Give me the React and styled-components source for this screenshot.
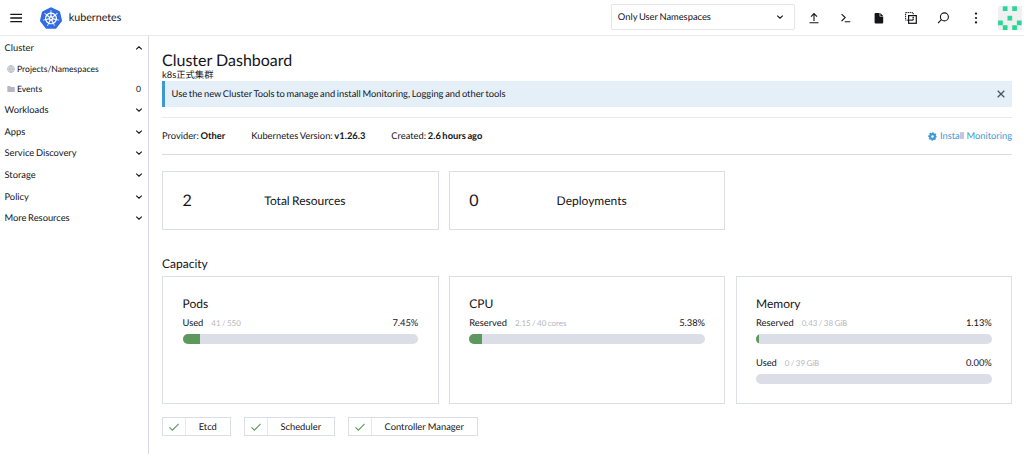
import React from 'react';
import styled, { createGlobalStyle } from 'styled-components';
import { SiKubernetes } from 'react-icons/si';

const GlobalStyle = createGlobalStyle`
  * { box-sizing: border-box; }
  body {
    margin: 0;
    background: #fff;
    color: #141419;
    font: 9.33px/14px Lato, "Noto Sans CJK SC", sans-serif;
    text-rendering: geometricPrecision;
    word-spacing: -0.7px;
  }
  svg { display: block; flex: none; }
`;

const Page = styled.div`
  height: 454px;
  display: grid;
  grid-template: 36px 1fr / 149px 1fr;
  overflow: hidden;
`;

const Header = styled.header`
  grid-column: 1 / -1;
  display: flex;
  align-items: center;
  border-bottom: 1px solid #e9eaf0;
  padding: 0 2px 0 10px;
`;

const Brand = styled.div`
  display: flex;
  align-items: center;
  gap: 6.5px;
  margin-left: 18.3px;
  color: #326ce5;
  span { color: #141419; font-size: 10.7px; }
`;

const NamespaceSelect = styled.div`
  width: 184px;
  height: 26px;
  margin: 0 9.8px 2px auto;
  padding: 0 10px 0 6px;
  border: 1px solid #e4e6ee;
  border-radius: 2px;
  display: flex;
  align-items: center;
  justify-content: space-between;
`;

const HeaderActions = styled.div`
  display: flex;
  align-items: center;
`;

const HeaderButton = styled.span`
  width: 32.4px;
  height: 24px;
  display: flex;
  align-items: center;
  justify-content: center;
  margin-left: ${(p) => (p.$first ? '-7px' : 0)};
`;

const AvatarBox = styled.div`
  margin-left: 6px;
`;

const Sidebar = styled.nav`
  border-right: 1px solid #d6d9e4;
  padding-top: 0.8px;
`;

const NavGroup = styled.div`
  height: 21.67px;
  padding: 0 5px 0 4.5px;
  display: flex;
  align-items: center;
  justify-content: space-between;
`;

const NavItem = styled.div`
  height: 20.4px;
  padding: 0 7px;
  display: flex;
  align-items: center;
  gap: 2px;
  font-size: 8.6px;
`;

const NavCount = styled.span`
  margin-left: auto;
`;

const Main = styled.main`
  padding: 15px 12px 0 13px;
`;

const Title = styled.h1`
  margin: 0;
  font-size: 16px;
  font-weight: 400;
  line-height: 20px;
  word-spacing: 0;
`;

const Description = styled.div`
  height: 10px;
  line-height: 7px;
`;

const Banner = styled.div`
  height: 26px;
  padding: 0 7px 0 6.5px;
  border-left: 3px solid #3d98d3;
  background: #e4eff8;
  display: flex;
  align-items: center;
  justify-content: space-between;
`;

const Glance = styled.section`
  height: 38px;
  margin-top: 10px;
  border-top: 1px solid #e9eaf0;
  border-bottom: 1px solid #d8dbe6;
  display: flex;
  align-items: center;
  gap: 26px;
`;

const InstallLink = styled.a`
  margin-left: auto;
  display: flex;
  align-items: center;
  gap: 3px;
  color: #3d98d3;
  word-spacing: 0;
`;

const CardGrid = styled.section`
  display: grid;
  grid-template-columns: repeat(3, 1fr);
  gap: 10.25px;
  margin-top: ${(p) => p.$top}px;
`;

const CountCard = styled.div`
  height: 59px;
  padding: 0 19.5px;
  border: 1px solid #dcdee7;
  display: flex;
  align-items: center;
`;

const CountValue = styled.span`
  font-size: 16px;
`;

const CountLabel = styled.span`
  flex: 1;
  text-align: center;
  font-size: 12px;
`;

const SectionTitle = styled.h3`
  margin: 26px 0 0;
  font-size: 12px;
  line-height: 16px;
  font-weight: 400;
`;

const CapacityCard = styled.div`
  height: 128px;
  padding: 18px 19.2px 18px 19.5px;
  border: 1px solid #dcdee7;
`;

const CapacityTitle = styled.h3`
  margin: 0;
  font-size: 12px;
  line-height: 18px;
  font-weight: 400;
`;

const Usage = styled.div`
  height: 40px;
  padding-top: 3px;
`;

const UsageRow = styled.div`
  display: flex;
  align-items: baseline;
  small { margin-left: 8px; font-size: 8px; color: #b6b6c2; }
  b { margin-left: auto; font-weight: 400; }
`;

const Track = styled.div`
  height: 10px;
  margin-top: 4px;
  border-radius: 5px;
  background: #dcdee7;
  overflow: hidden;
`;

const Fill = styled.div`
  height: 100%;
  background: #5d995d;
`;

const Services = styled.section`
  display: flex;
  gap: 13px;
  margin-top: 13px;
`;

const ServiceBox = styled.div`
  width: ${(p) => p.$width}px;
  height: 19px;
  border: 1px solid #dcdee7;
  display: flex;
`;

const ServiceState = styled.span`
  width: 22.5px;
  border-right: 1px solid #e6e8ef;
  display: flex;
  align-items: center;
  justify-content: center;
`;

const ServiceName = styled.span`
  flex: 1;
  text-align: center;
  line-height: 17px;
  word-spacing: 0;
`;

const Stroke = ({ size = 12, d, width = 1.1, color = '#141419' }) => (
  <svg width={size} height={size} viewBox={`0 0 ${size} ${size}`} fill="none" stroke={color} strokeWidth={width}>
    <path d={d} />
  </svg>
);

const Chevron = ({ up }) => (
  <Stroke size={8} width={1.1} d={up ? 'M1.2 5.4 4 2.8 6.8 5.4' : 'M1.2 2.6 4 5.2 6.8 2.6'} />
);

const MenuIcon = () => <Stroke size={12} width={1.3} d="M0.3 2.4H12M0.3 6H12M0.3 9.6H12" />;
const UploadIcon = () => <Stroke size={12} d="M1.5 10.8H10.5M6 9V1.8M3 4.6 6 1.6 9 4.6" />;
const ShellIcon = () => <Stroke size={12} d="M1.6 2.2 5.2 5.6 1.6 9M4.8 9.8H10.2" />;

const FileIcon = () => (
  <svg width="12" height="12" viewBox="0 0 12 12" fill="#141419">
    <path d="M2.6 1H6.6V4.6H10.2V10.4Q10.2 11.4 9.2 11.4H2.6Q1.6 11.4 1.6 10.4V2Q1.6 1 2.6 1Z" />
    <path d="M7.3 1 10.2 3.9H7.3Z" />
  </svg>
);

const CopyIcon = () => (
  <svg width="12" height="12" viewBox="0 0 12 12" fill="none" stroke="#141419">
    <rect x="0.6" y="0.6" width="7.6" height="7.6" strokeWidth="1" strokeDasharray="1.3 0.7" />
    <rect x="3.6" y="3.6" width="7.7" height="7.7" strokeWidth="1.2" />
    <path d="M5 8.1H8.1V5" strokeWidth="0.9" strokeDasharray="1.2 0.6" />
  </svg>
);

const SearchIcon = () => (
  <svg width="12" height="12" viewBox="0 0 12 12" fill="none" stroke="#141419" strokeWidth="1.1">
    <circle cx="7.4" cy="4.9" r="4" />
    <path d="M4.4 7.7 1 11.2" />
  </svg>
);

const DotsIcon = () => (
  <svg width="4" height="12" viewBox="0 0 4 12" fill="#141419">
    {[1.6, 6, 10.4].map((y) => <circle key={y} cx="2" cy={y} r="1.1" />)}
  </svg>
);

const AVATAR_CELLS = [[1, 0], [3, 0], [2, 2], [0, 3], [4, 3], [1, 4], [3, 4]];

const Avatar = () => (
  <svg width="24" height="24" viewBox="0 0 24 24">
    <rect width="24" height="24" fill="#f0f0f0" />
    {AVATAR_CELLS.map(([x, y]) => (
      <rect key={`${x}-${y}`} x={0.1 + x * 4.7} y={0.3 + y * 4.74} width="4.7" height="4.74" fill="#27d796" />
    ))}
  </svg>
);

const GlobeIcon = () => (
  <svg width="8" height="8" viewBox="0 0 8 8" fill="#e6e6ec" stroke="#b0b0be" strokeWidth="0.6">
    <circle cx="4" cy="4" r="3.5" />
    <path d="M0.5 4H7.5M4 0.5V7.5M4 0.5Q0.6 4 4 7.5Q7.4 4 4 0.5" fill="none" />
  </svg>
);

const FolderIcon = () => (
  <svg width="8" height="8" viewBox="0 0 8 8" fill="#b6b6c2">
    <path d="M.9 1H3L4 2H7.2Q7.8 2 7.8 2.6V6.3Q7.8 6.9 7.2 6.9H.9Q.3 6.9 .3 6.3V1.6Q.3 1 .9 1Z" />
  </svg>
);

const GearIcon = () => (
  <svg width="9" height="9" viewBox="0 0 9 9" fill="none" stroke="#3d98d3">
    <circle cx="4.5" cy="4.5" r="2.4" strokeWidth="2.2" />
    <circle cx="4.5" cy="4.5" r="3.7" strokeWidth="1.2" strokeDasharray="1.65 1.256" strokeDashoffset="0.8" />
  </svg>
);

const ACTIONS = [UploadIcon, ShellIcon, FileIcon, CopyIcon, SearchIcon, DotsIcon];
const GROUPS = ['Workloads', 'Apps', 'Service Discovery', 'Storage', 'Policy', 'More Resources'];
const COUNTS = [
  { value: 2, label: 'Total Resources' },
  { value: 0, label: 'Deployments' },
];
const CAPACITY = [
  { title: 'Pods', rows: [{ name: 'Used', detail: '41 / 550', percent: '7.45%' }] },
  { title: 'CPU', rows: [{ name: 'Reserved', detail: '2.15 / 40 cores', percent: '5.38%' }] },
  {
    title: 'Memory',
    rows: [
      { name: 'Reserved', detail: '0.43 / 38 GiB', percent: '1.13%' },
      { name: 'Used', detail: '0 / 39 GiB', percent: '0.00%' },
    ],
  },
];
const SERVICES = [
  { name: 'Etcd', width: 69 },
  { name: 'Scheduler', width: 91 },
  { name: 'Controller Manager', width: 130 },
];

export default function App() {
  return (
    <Page>
      <GlobalStyle />
      <Header>
        <MenuIcon />
        <Brand>
          <SiKubernetes size={22} />
          <span>kubernetes</span>
        </Brand>
        <NamespaceSelect>
          Only User Namespaces
          <Chevron />
        </NamespaceSelect>
        <HeaderActions>
          {ACTIONS.map((Icon, i) => (
            <HeaderButton key={i} $first={i === 0}><Icon /></HeaderButton>
          ))}
          <AvatarBox><Avatar /></AvatarBox>
        </HeaderActions>
      </Header>

      <Sidebar>
        <NavGroup>Cluster<Chevron up /></NavGroup>
        <NavItem><GlobeIcon />Projects/Namespaces</NavItem>
        <NavItem><FolderIcon />Events<NavCount>0</NavCount></NavItem>
        {GROUPS.map((name) => (
          <NavGroup key={name}>{name}<Chevron /></NavGroup>
        ))}
      </Sidebar>

      <Main>
        <Title>Cluster Dashboard</Title>
        <Description>k8s正式集群</Description>
        <Banner>
          Use the new Cluster Tools to manage and install Monitoring, Logging and other tools
          <Stroke size={8} width={1.3} color="#4c5260" d="M.7 .7 7.3 7.3M7.3 .7 .7 7.3" />
        </Banner>
        <Glance>
          <span>Provider: <b>Other</b></span>
          <span>Kubernetes Version: <b>v1.26.3</b></span>
          <span>Created: <b>2.6 hours ago</b></span>
          <InstallLink><GearIcon />Install Monitoring</InstallLink>
        </Glance>
        <CardGrid $top={16}>
          {COUNTS.map((c) => (
            <CountCard key={c.label}>
              <CountValue>{c.value}</CountValue>
              <CountLabel>{c.label}</CountLabel>
            </CountCard>
          ))}
        </CardGrid>
        <SectionTitle>Capacity</SectionTitle>
        <CardGrid $top={4}>
          {CAPACITY.map((c) => (
            <CapacityCard key={c.title}>
              <CapacityTitle>{c.title}</CapacityTitle>
              {c.rows.map((r) => (
                <Usage key={r.name}>
                  <UsageRow>
                    <span>{r.name}</span>
                    <small>{r.detail}</small>
                    <b>{r.percent}</b>
                  </UsageRow>
                  <Track><Fill style={{ width: r.percent }} /></Track>
                </Usage>
              ))}
            </CapacityCard>
          ))}
        </CardGrid>
        <Services>
          {SERVICES.map((s) => (
            <ServiceBox key={s.name} $width={s.width}>
              <ServiceState>
                <Stroke size={10} width={1.1} color="#5d995d" d="M.5 5.4 3.4 8.2 9.6 1.8" />
              </ServiceState>
              <ServiceName>{s.name}</ServiceName>
            </ServiceBox>
          ))}
        </Services>
      </Main>
    </Page>
  );
}
